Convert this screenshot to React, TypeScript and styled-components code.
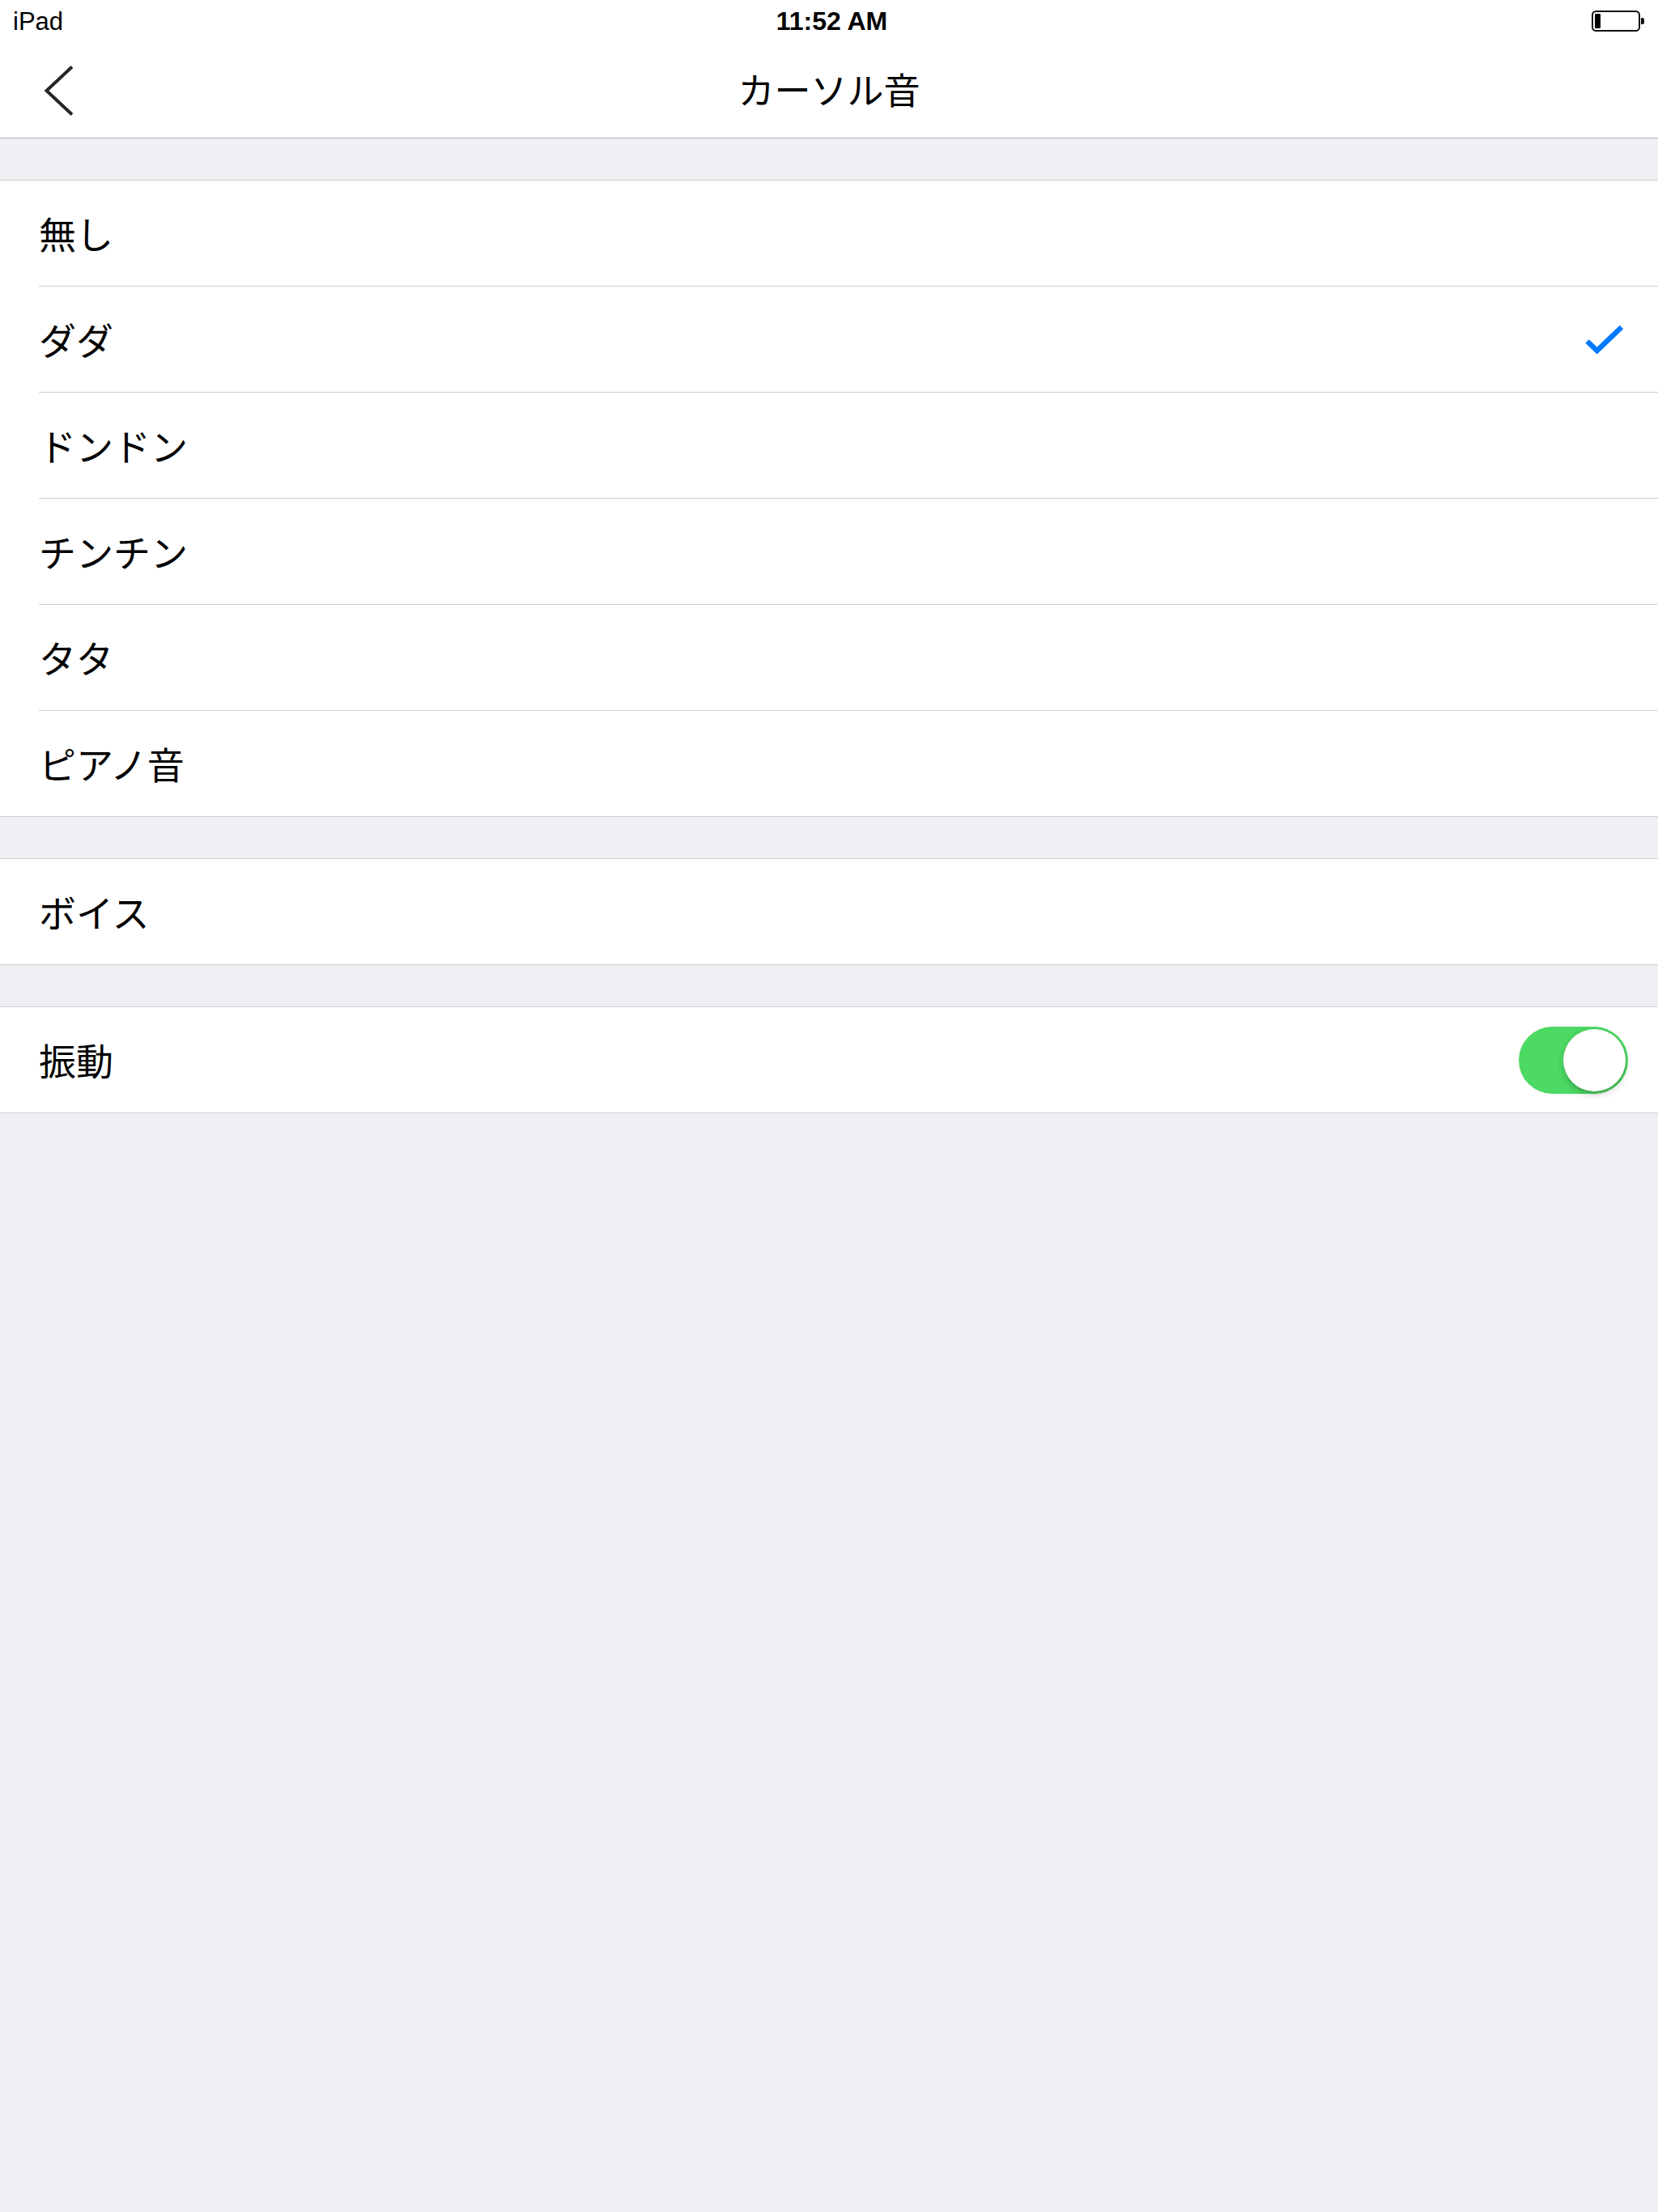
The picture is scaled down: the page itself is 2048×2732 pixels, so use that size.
import React from "react";
import styled, { createGlobalStyle } from "styled-components";

const GlobalStyle = createGlobalStyle`
  html, body {
    margin: 0;
    padding: 0;
    background: #efeff4;
  }
  * { box-sizing: border-box; }
`;

const Page = styled.div`
  min-height: 2732px;
  background: #efeff4;
  font-family: "Noto Sans CJK JP", "Noto Sans", sans-serif;
  color: #000;
`;

const StatusBar = styled.div`
  height: 53px;
  background: #fff;
  display: grid;
  grid-template-columns: 1fr auto 1fr;
  align-items: center;
  padding: 0 15px 0 16px;
  font-family: "Liberation Sans", Arial, sans-serif;
  font-size: 31px;
  line-height: 53px;
`;

const Carrier = styled.span`
  justify-self: start;
`;

const Clock = styled.span`
  font-weight: 700;
  font-size: 32px;
  padding-left: 6px;
`;

const BatteryWrap = styled.span`
  justify-self: end;
  display: flex;
  align-items: center;
  padding-right: 1px;
`;

const NavBar = styled.header`
  height: 118px;
  background: #fff;
  border-bottom: 1px solid #b2b2b2;
  display: grid;
  grid-template-columns: 1fr auto 1fr;
  align-items: center;
  padding: 0 0 0 54px;
`;

const BackButton = styled.button`
  justify-self: start;
  border: 0;
  background: none;
  padding: 0;
  display: flex;
  align-items: center;
  cursor: pointer;
`;

const Title = styled.h1`
  margin: 0;
  font-size: 45px;
  font-weight: 400;
  line-height: 1;
  letter-spacing: 0;
  padding: 0 54px 4px 0;
`;

const Section = styled.section`
  margin-top: 51px;
  background: #fff;
  border-top: 1px solid #cfcfd3;
  border-bottom: 1px solid #cfcfd3;
`;

const Row = styled.div<{ $last?: boolean }>`
  height: ${(p) => (p.$last ? 130 : 131)}px;
  padding-left: 48px;
  display: flex;
  align-items: stretch;
`;

const RowInner = styled.div<{ $last?: boolean }>`
  flex: 1;
  display: flex;
  align-items: center;
  justify-content: space-between;
  padding-right: 37px;
  border-bottom: ${(p) => (p.$last ? "none" : "1px solid #cfcfd3")};
`;

const Label = styled.span`
  font-size: 46px;
  line-height: 1;
  padding-bottom: 3px;
`;

const Track = styled.div<{ $on: boolean }>`
  width: 135px;
  height: 83px;
  border-radius: 42px;
  background: ${(p) => (p.$on ? "#4cd964" : "#e5e5ea")};
  display: flex;
  align-items: center;
  justify-content: ${(p) => (p.$on ? "flex-end" : "flex-start")};
  padding: 3px;
`;

const Knob = styled.div`
  width: 77px;
  height: 77px;
  border-radius: 50%;
  background: #fff;
  box-shadow: 0 4px 10px rgba(0, 0, 0, 0.18), 0 4px 1px rgba(0, 0, 0, 0.06),
    0 0 0 0.5px rgba(0, 0, 0, 0.06);
`;

const Battery = () => (
  <svg width="66" height="27" viewBox="0 0 66 27">
    <rect x="1" y="1" width="58" height="24" rx="4.5" fill="none" stroke="#111" strokeWidth="2" />
    <rect x="4" y="4" width="7" height="18" rx="1" fill="#000" />
    <path d="M61 9 h1.5 a2.5 2.5 0 0 1 2.5 2.5 v3 a2.5 2.5 0 0 1 -2.5 2.5 h-1.5 z" fill="#111" />
  </svg>
);

const Chevron = () => (
  <svg width="40" height="64" viewBox="0 0 40 64">
    <polyline
      points="35,2.5 3.5,32 35,61.5"
      fill="none"
      stroke="#262628"
      strokeWidth="4"
      strokeLinejoin="miter"
    />
  </svg>
);

const Check = () => (
  <svg width="56" height="42" viewBox="0 0 56 42">
    <polyline
      points="5.5,23.5 17.7,35 48,6"
      fill="none"
      stroke="#007aff"
      strokeWidth="6.5"
      strokeLinejoin="miter"
    />
  </svg>
);

const Toggle = ({ on }: { on: boolean }) => (
  <Track $on={on}>
    <Knob />
  </Track>
);

const sounds = ["無し", "ダダ", "ドンドン", "チンチン", "タタ", "ピアノ音"];
const selected = "ダダ";

export default function App() {
  return (
    <Page>
      <GlobalStyle />
      <StatusBar>
        <Carrier>iPad</Carrier>
        <Clock>11:52 AM</Clock>
        <BatteryWrap>
          <Battery />
        </BatteryWrap>
      </StatusBar>
      <NavBar>
        <BackButton aria-label="戻る">
          <Chevron />
        </BackButton>
        <Title>カーソル音</Title>
        <span />
      </NavBar>

      <Section>
        {sounds.map((s, i) => {
          const last = i === sounds.length - 1;
          return (
            <Row key={s} $last={last}>
              <RowInner $last={last}>
                <Label>{s}</Label>
                {s === selected && <Check />}
              </RowInner>
            </Row>
          );
        })}
      </Section>

      <Section>
        <Row $last>
          <RowInner $last>
            <Label>ボイス</Label>
          </RowInner>
        </Row>
      </Section>

      <Section>
        <Row $last>
          <RowInner $last>
            <Label>振動</Label>
            <Toggle on />
          </RowInner>
        </Row>
      </Section>
    </Page>
  );
}
